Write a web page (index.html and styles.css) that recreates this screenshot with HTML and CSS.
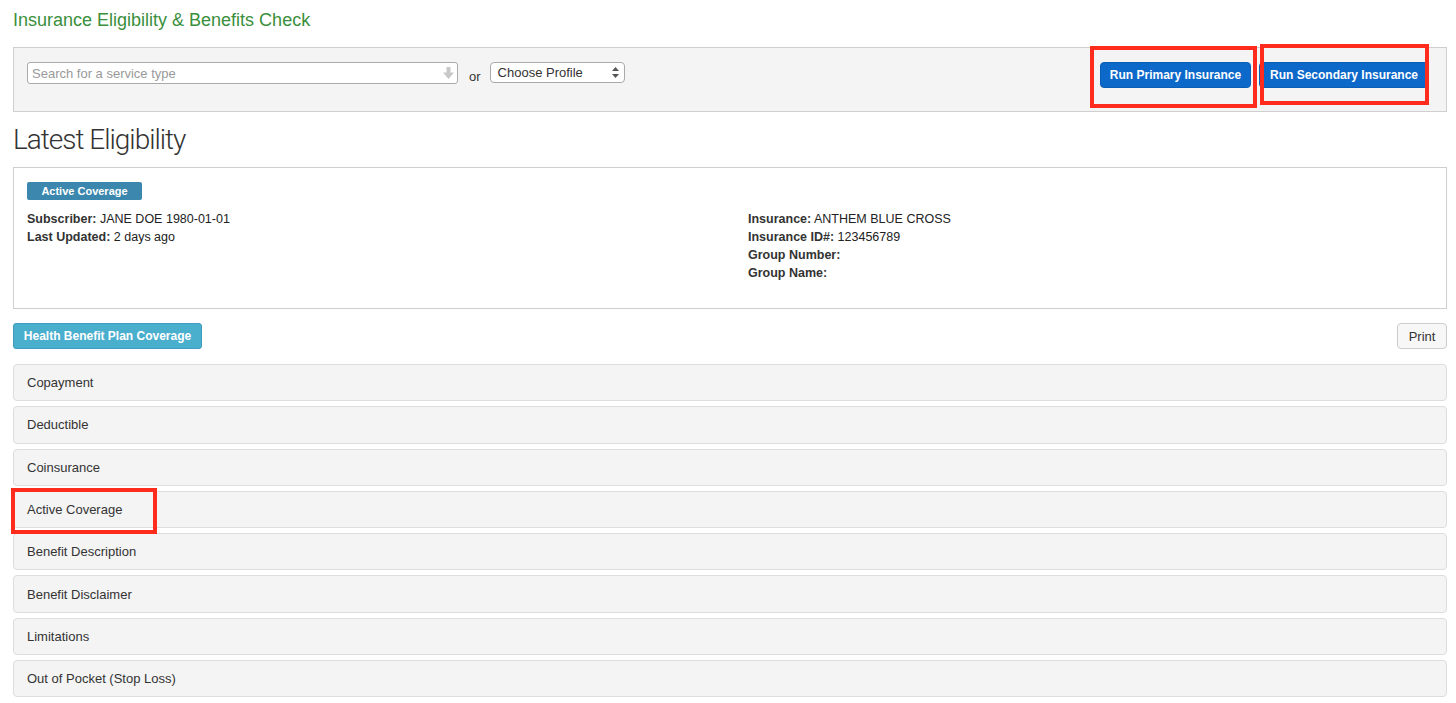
FILE: index.html
```html
<!DOCTYPE html>
<html>
<head>
<meta charset="utf-8">
<link rel="stylesheet" href="styles.css">
</head>
<body>
<div class="page">
  <h1 class="title">Insurance Eligibility &amp; Benefits Check</h1>
  <div class="toolbar">
    <div class="search">
      <span class="placeholder">Search for a service type</span>
      <svg class="search-arrow" width="11" height="12" viewBox="0 0 11 12"><path d="M3.5 0h4v5.5h3.5L5.5 12 0 5.5h3.5z" fill="#c8c8c8"/></svg>
    </div>
    <span class="or">or</span>
    <div class="select">
      <span>Choose Profile</span>
      <svg width="7" height="11" viewBox="0 0 7 11"><path d="M3.5 0L7 4H0z M3.5 11L0 7h7z" fill="#555"/></svg>
    </div>
    <div class="spacer"></div>
    <button class="btn-primary primary-run">Run Primary Insurance</button>
    <button class="btn-primary secondary-run">Run Secondary Insurance</button>
  </div>

  <h2 class="section-title">Latest Eligibility</h2>
  <div class="elig-box">
    <span class="badge">Active Coverage</span>
    <div class="elig-cols">
      <div class="col">
        <div><b>Subscriber:</b> JANE DOE 1980-01-01</div>
        <div><b>Last Updated:</b> 2 days ago</div>
      </div>
      <div class="col">
        <div><b>Insurance:</b> ANTHEM BLUE CROSS</div>
        <div><b>Insurance ID#:</b> 123456789</div>
        <div><b>Group Number:</b></div>
        <div><b>Group Name:</b></div>
      </div>
    </div>
  </div>

  <div class="action-row">
    <button class="btn-info">Health Benefit Plan Coverage</button>
    <button class="btn-default">Print</button>
  </div>

  <div class="accordion">
    <div class="panel">Copayment</div>
    <div class="panel">Deductible</div>
    <div class="panel">Coinsurance</div>
    <div class="panel">Active Coverage</div>
    <div class="panel">Benefit Description</div>
    <div class="panel">Benefit Disclaimer</div>
    <div class="panel">Limitations</div>
    <div class="panel">Out of Pocket (Stop Loss)</div>
  </div>
</div>

<div class="mark mark-primary"></div>
<div class="mark mark-secondary"></div>
<div class="mark mark-active"></div>
</body>
</html>
```

FILE: styles.css
```css
* { box-sizing: border-box; }
html, body { margin: 0; padding: 0; background: #fff; }
body {
  font-family: "Liberation Sans", Arial, Helvetica, sans-serif;
  font-size: 13px;
  color: #333;
  position: relative;
}
.page { padding: 8px 9px 0 13px; }

.title {
  margin: 0;
  font-size: 18px;
  line-height: 24px;
  font-weight: normal;
  color: #3a8f3c;
}

.toolbar {
  margin-top: 15px;
  height: 65px;
  border: 1px solid #cfcfcf;
  background: #f4f4f4;
  display: flex;
  align-items: flex-start;
  padding: 14px 17px 0 13px;
}
.search {
  width: 431px;
  height: 22px;
  background: #fff;
  border: 1px solid #aaa;
  border-radius: 3px;
  display: flex;
  align-items: center;
  justify-content: space-between;
  padding: 0 3px 0 4px;
}
.placeholder { color: #999; font-size: 13px; }
.or { margin: 7px 9px 0 11px; font-size: 13px; color: #333; }
.select {
  width: 135px;
  height: 21px;
  background: #fff;
  border: 1px solid #aaa;
  border-radius: 4px;
  display: flex;
  align-items: center;
  justify-content: space-between;
  padding: 0 5px 0 7px;
  font-size: 13px;
  color: #333;
}
.spacer { flex: 1; }
.btn-primary {
  height: 26px;
  border: 1px solid #0b5eb5;
  background: #0c68c9;
  color: #fff;
  font-family: inherit;
  font-size: 12px;
  font-weight: bold;
  border-radius: 4px;
  padding: 0;
}
.primary-run { width: 151px; }
.secondary-run { width: 170px; margin-left: 8px; border-radius: 4px 0 0 4px; }

.section-title {
  margin: 11px 0 10px;
  font-family: Roboto, "Liberation Sans", sans-serif;
  font-size: 28px;
  line-height: 34px;
  font-weight: 300;
  letter-spacing: -1px;
  color: #333;
}

.elig-box {
  border: 1px solid #cfcfcf;
  height: 142px;
  padding: 14px 13px 0 13px;
}
.badge {
  display: inline-block;
  width: 115px;
  height: 18px;
  line-height: 18px;
  text-align: center;
  background: #3b87ad;
  color: #fff;
  font-size: 11px;
  font-weight: bold;
  border-radius: 2px;
}
.elig-cols {
  margin-top: 10px;
  display: grid;
  grid-template-columns: 721px 1fr;
  line-height: 18px;
  font-size: 12.5px;
  color: #222;
}
.elig-cols b { color: #333; }

.action-row {
  margin-top: 14px;
  display: flex;
  justify-content: space-between;
  align-items: center;
}
.btn-info {
  height: 26px;
  width: 189px;
  border: 1px solid #3f9cbc;
  background: #4aaecd;
  color: #fff;
  font-family: inherit;
  font-size: 12px;
  font-weight: bold;
  border-radius: 3px;
  padding: 0;
}
.btn-default {
  height: 26px;
  width: 50px;
  border: 1px solid #ccc;
  background: #f7f7f7;
  color: #333;
  font-family: inherit;
  font-size: 13px;
  border-radius: 4px;
  padding: 0;
}

.accordion {
  margin-top: 15px;
  display: flex;
  flex-direction: column;
  gap: 5px;
}
.panel {
  height: 37.3px;
  border: 1px solid #ddd;
  border-radius: 4px;
  background: #f4f4f4;
  padding-left: 13px;
  display: flex;
  align-items: center;
  font-size: 13px;
  color: #333;
}

.mark {
  position: absolute;
  border: 4px solid #ff2b1c;
  pointer-events: none;
}
.mark-primary { left: 1090px; top: 46px; width: 167px; height: 62px; }
.mark-secondary { left: 1260px; top: 44px; width: 169px; height: 61px; }
.mark-active { left: 11px; top: 488px; width: 146px; height: 46px; }
```
